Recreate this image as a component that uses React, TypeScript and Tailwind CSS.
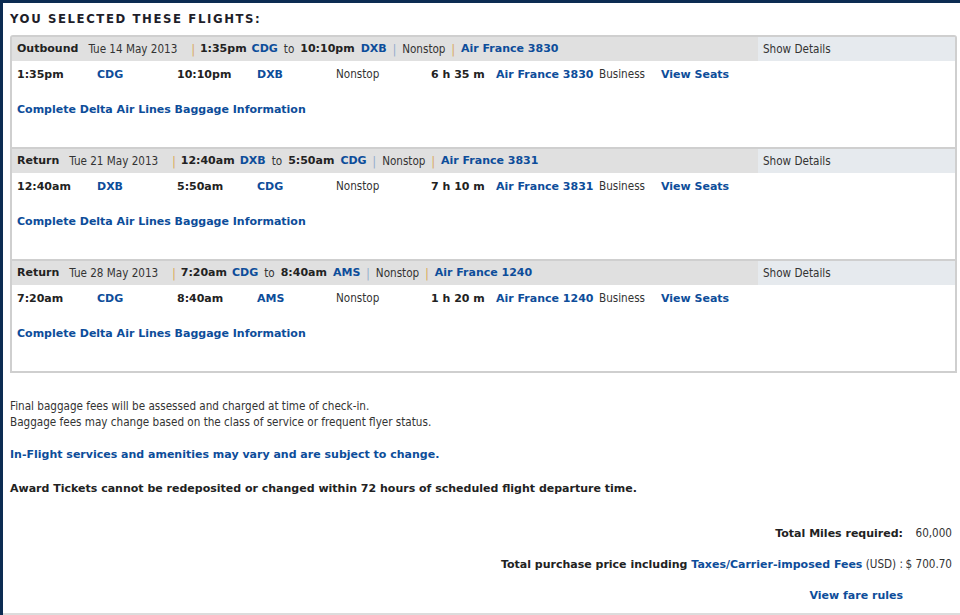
import { ReactNode } from "react";

type Flight = {
  label: string;
  date: string;
  dep: string;
  from: string;
  arr: string;
  to: string;
  duration: string;
  flight: string;
};

const FLIGHTS: Flight[] = [
  {
    label: "Outbound",
    date: "Tue 14 May 2013",
    dep: "1:35pm",
    from: "CDG",
    arr: "10:10pm",
    to: "DXB",
    duration: "6 h 35 m",
    flight: "Air France 3830",
  },
  {
    label: "Return",
    date: "Tue 21 May 2013",
    dep: "12:40am",
    from: "DXB",
    arr: "5:50am",
    to: "CDG",
    duration: "7 h 10 m",
    flight: "Air France 3831",
  },
  {
    label: "Return",
    date: "Tue 28 May 2013",
    dep: "7:20am",
    from: "CDG",
    arr: "8:40am",
    to: "AMS",
    duration: "1 h 20 m",
    flight: "Air France 1240",
  },
];

// bold text uses the wider face, regular text the condensed one
function B({ children }: { children: ReactNode }) {
  return (
    <span className="font-['DejaVu_Sans',sans-serif] text-[11px] font-bold">
      {children}
    </span>
  );
}

function Blue({ children }: { children: ReactNode }) {
  return (
    <span className="font-['DejaVu_Sans',sans-serif] text-[11px] font-bold text-[#0d4d9a]">
      {children}
    </span>
  );
}

function Pipe({ color }: { color: string }) {
  return (
    <span className="mx-[6px]" style={{ color }}>
      |
    </span>
  );
}

function FlightBlock({ f, first }: { f: Flight; first: boolean }) {
  return (
    <div className={first ? "" : "border-t-2 border-[#cfcfcf]"}>
      <div className="flex h-[24px] bg-[#e0e0e0]">
        <div className="flex flex-1 items-center whitespace-nowrap pl-[5px] pt-[1px]">
          <B>{f.label}</B>
          <span className="ml-[10px] text-[#333]">{f.date}</span>
          <span className="ml-[14px] mr-[5px] text-[#d8a452]">|</span>
          <B>{f.dep}</B>
          <span className="w-[5px]" />
          <Blue>{f.from}</Blue>
          <span className="mx-[6px] text-[#333]">to</span>
          <B>{f.arr}</B>
          <span className="w-[6px]" />
          <Blue>{f.to}</Blue>
          <Pipe color="#8fa9cc" />
          <span className="text-[#333]">Nonstop</span>
          <Pipe color="#d8a452" />
          <Blue>{f.flight}</Blue>
        </div>
        <div className="flex w-[197px] items-center bg-[#e6eaee] pl-[5px] pt-[1px] text-[#333]">
          Show Details
        </div>
      </div>
      <div className="h-[86px] pl-[5px] pt-[1px]">
        <div className="flex h-[26px] items-center whitespace-nowrap">
          <span className="w-[80px]">
            <B>{f.dep}</B>
          </span>
          <span className="w-[80px]">
            <Blue>{f.from}</Blue>
          </span>
          <span className="w-[80px]">
            <B>{f.arr}</B>
          </span>
          <span className="w-[79px]">
            <Blue>{f.to}</Blue>
          </span>
          <span className="w-[95px] text-[#333]">Nonstop</span>
          <span className="w-[65px]">
            <B>{f.duration}</B>
          </span>
          <span className="w-[103px]">
            <Blue>{f.flight}</Blue>
          </span>
          <span className="w-[62px] text-[#333]">Business</span>
          <Blue>View Seats</Blue>
        </div>
        <div className="mt-[14px] flex h-[16px] items-center">
          <Blue>Complete Delta Air Lines Baggage Information</Blue>
        </div>
      </div>
    </div>
  );
}

export default function App() {
  return (
    <div className="h-[615px] w-[960px] overflow-hidden bg-[#0c2c52] pl-[3px] pt-[3px] font-['DejaVu_Sans_Condensed','DejaVu_Sans',sans-serif] text-[11.6px] text-[#222]">
      <div className="h-[612px] border-b-2 border-[#dcdcdc] bg-white pl-[7px] pr-[3px] pt-[8px]">
        <h1 className="mb-[8px] h-[16px] text-[13px] font-bold leading-[16px] tracking-[1.6px] text-[#1e1e2a]">
          YOU SELECTED THESE FLIGHTS:
        </h1>
        <div className="rounded-t-[3px] border-2 border-[#cfcfcf]">
          {FLIGHTS.map((f, i) => (
            <FlightBlock key={i} f={f} first={i === 0} />
          ))}
        </div>

        <div className="mt-[25px] leading-[16px] text-[#333]">
          <p>Final baggage fees will be assessed and charged at time of check-in.</p>
          <p>Baggage fees may change based on the class of service or frequent flyer status.</p>
        </div>
        <p className="mt-[16px] leading-[16px]">
          <Blue>In-Flight services and amenities may vary and are subject to change.</Blue>
        </p>
        <p className="mt-[17px] leading-[16px]">
          <B>Award Tickets cannot be redeposited or changed within 72 hours of scheduled flight departure time.</B>
        </p>

        <div className="mr-[5px] mt-[28px] grid grid-cols-[1fr_48px] gap-x-[1px] gap-y-[14px] whitespace-nowrap leading-[16px]">
          <div className="text-right">
            <B>Total Miles required:</B>
          </div>
          <div className="text-right text-[#333]">60,000</div>
          <div className="text-right">
            <B>Total purchase price including </B>
            <Blue>Taxes/Carrier-imposed Fees</Blue>
            <span className="text-[#333]"> (USD) :</span>
          </div>
          <div className="text-right text-[#333]">$ 700.70</div>
          <div className="text-right">
            <Blue>View fare rules</Blue>
          </div>
          <div />
        </div>
      </div>
    </div>
  );
}
